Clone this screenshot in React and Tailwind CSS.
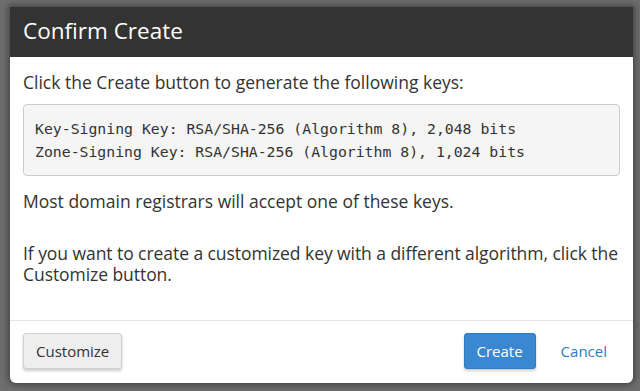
import React from "react";

const sans = { fontFamily: '"Open Sans", "Noto Sans", sans-serif' };

function ConfirmCreateModal() {
  return (
    <div
      className="w-[623px] ml-[10px] mt-[7px] rounded-b-[6px] bg-white shadow-[0_0_6px_2px_rgba(40,40,40,0.6)] overflow-hidden"
      style={sans}
    >
      <div className="h-[50px] bg-[#333333] px-[13px] flex items-center">
        <h1 className="text-[22.5px] text-white leading-none pb-[2px]">Confirm Create</h1>
      </div>
      <div className="px-[13px] pt-[15px] pb-[35px] text-[#333333] text-[17.5px] leading-[21px]">
        <p>Click the Create button to generate the following keys:</p>
        <pre
          className="mt-[11px] bg-[#f5f5f5] border border-[#cccccc] rounded-[4px] px-[11px] py-[12px] text-[14.8px] leading-[23px] text-[#333333]"
          style={{ fontFamily: '"DejaVu Sans Mono", "Liberation Mono", monospace' }}
        >
          {"Key-Signing Key: RSA/SHA-256 (Algorithm 8), 2,048 bits\nZone-Signing Key: RSA/SHA-256 (Algorithm 8), 1,024 bits"}
        </pre>
        <p className="mt-[15px]">Most domain registrars will accept one of these keys.</p>
        <p className="mt-[31px] tracking-[-0.06px]">
          If you want to create a customized key with a different algorithm, click the Customize button.
        </p>
      </div>
      <div className="border-t border-[#e5e5e5] px-[13px] pt-[12px] pb-[14px] flex items-center">
        <button className="h-[36px] px-[12px] bg-[#eeeeee] border border-[#d0d0d0] rounded-[3px] text-[15px] text-[#333333] shadow-[0_2px_3px_rgba(0,0,0,0.2)]">
          Customize
        </button>
        <div className="ml-auto flex items-center">
          <button className="h-[36px] px-[12px] bg-[#3a88d2] border border-[#2f7bc2] rounded-[3px] text-[15px] text-white shadow-[0_2px_3px_rgba(0,0,0,0.2)]">
            Create
          </button>
          <button className="ml-[25px] mr-[13px] text-[15px] text-[#2f7bc2]">Cancel</button>
        </div>
      </div>
    </div>
  );
}

export default function App() {
  return (
    <div className="w-[640px] h-[391px] bg-[#6e6e6e] overflow-hidden">
      <ConfirmCreateModal />
    </div>
  );
}
